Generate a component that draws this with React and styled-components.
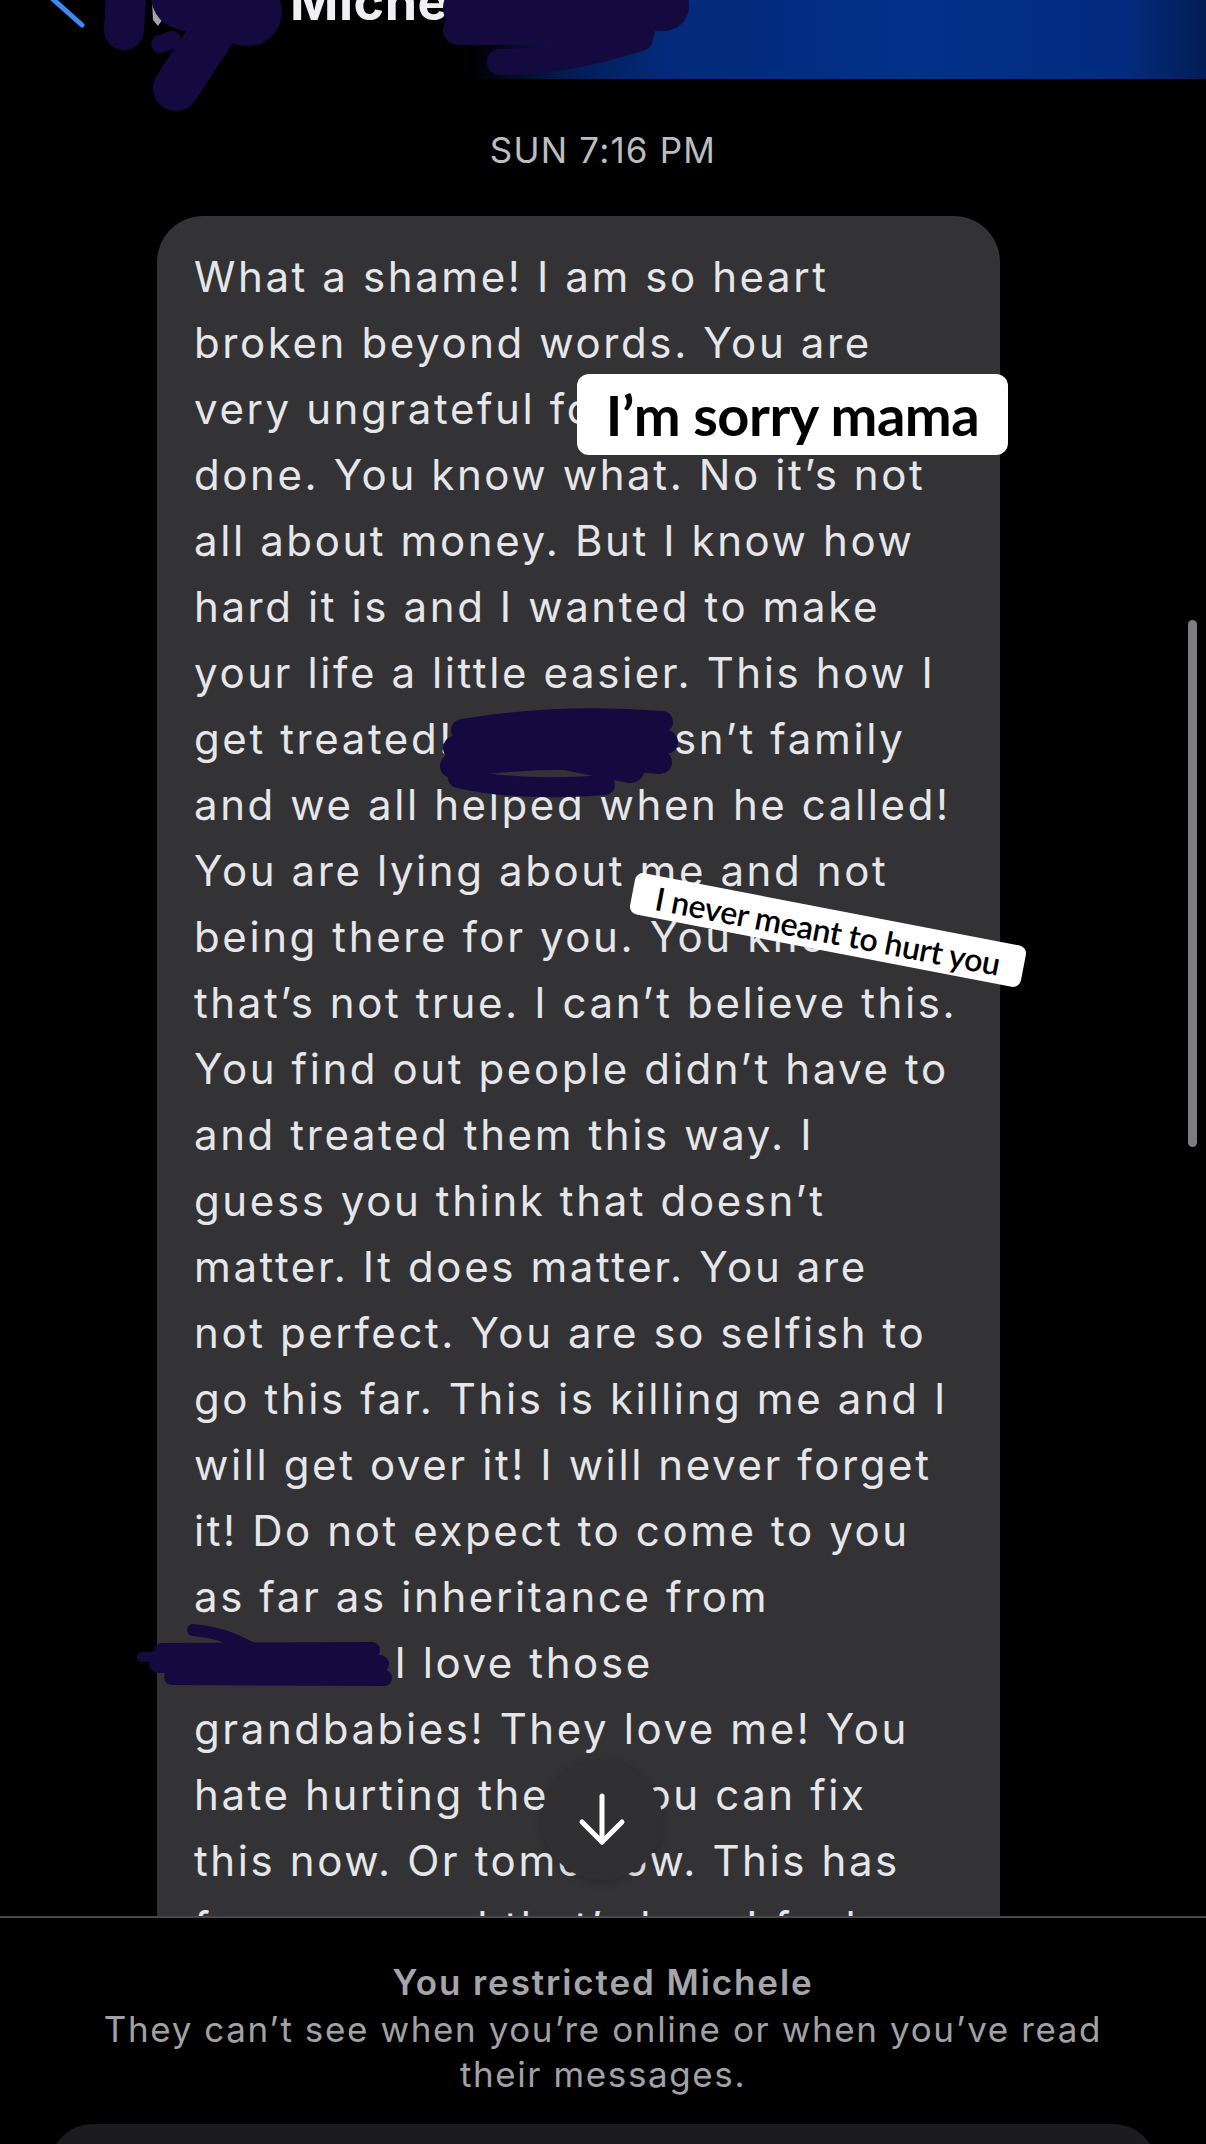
import React from 'react';
import styled, { createGlobalStyle } from 'styled-components';

const GlobalStyle = createGlobalStyle`
    html, body {
        margin: 0;
        padding: 0;
        background: #000;
    }
    * {
        box-sizing: border-box;
    }
`;

const StyledScreen = styled.div`
    position: relative;
    width: 1206px;
    height: 2144px;
    overflow: hidden;
    display: flex;
    flex-direction: column;
    background: #000;
    font-family: Inter, "Noto Sans", sans-serif;
`;

const StyledHeader = styled.header`
    flex: none;
    height: 79px;
    display: flex;
    align-items: flex-start;
    overflow: hidden;
    background: linear-gradient(90deg, #000 0%, #000 39%, #021c52 47%, #032a7a 55%, #033089 76%, #032c80 93%, #021d55 100%);
`;

const StyledBackIcon = styled.svg`
    flex: none;
    width: 50px;
    height: 30px;
    margin-left: 40px;
`;

const StyledName = styled.h1`
    margin: -24px 0 0 200px;
    font-size: 52px;
    line-height: 1;
    font-weight: 700;
    color: #f0f0f2;
    letter-spacing: 0.5px;
`;

const StyledThread = styled.main`
    flex: 1;
    min-height: 0;
    overflow: hidden;
    display: flex;
    flex-direction: column;
    align-items: flex-start;
`;

const StyledTimestamp = styled.div`
    align-self: stretch;
    margin-top: 50px;
    text-align: center;
    font-size: 35px;
    line-height: 42px;
    letter-spacing: 1.2px;
    color: #bdbdc1;
`;

const StyledBubble = styled.div`
    flex: none;
    width: 843px;
    margin: 45px 0 0 157px;
    padding: 28px 0 40px 37px;
    border-radius: 46px;
    background: #333335;
    color: #e6e6e8;
    font-size: 42px;
    line-height: 66px;
    letter-spacing: 2.6px;
`;

const StyledLine = styled.div`
    white-space: nowrap;
`;

const StyledHidden = styled.span`
    display: inline-block;
    width: ${({ $w }) => $w}px;
`;

const StyledFooter = styled.footer`
    flex: none;
    height: 228px;
    padding-top: 41px;
    border-top: 2px solid #48484a;
    display: flex;
    flex-direction: column;
    align-items: center;
    text-align: center;
`;

const StyledNoticeTitle = styled.div`
    font-size: 35px;
    line-height: 46px;
    font-weight: 600;
    letter-spacing: 1.9px;
    color: #a5a5aa;
`;

const StyledNoticeText = styled.div`
    max-width: 1020px;
    margin-top: 2px;
    font-size: 35px;
    line-height: 45px;
    letter-spacing: 1.6px;
    color: #a1a1a6;
`;

const StyledComposer = styled.div`
    flex: none;
    width: 1108px;
    height: 90px;
    margin-top: 27px;
    border-radius: 44px;
    background: #1c1c1e;
`;

const StyledScrollbar = styled.div`
    position: absolute;
    left: 1188px;
    top: 620px;
    width: 9px;
    height: 527px;
    border-radius: 5px;
    background: #7e7e80;
`;

const StyledScrollDown = styled.div`
    position: absolute;
    left: 542px;
    top: 1760px;
    width: 120px;
    height: 120px;
    border-radius: 50%;
    display: flex;
    align-items: center;
    justify-content: center;
    background: #303032;
    box-shadow: 0 2px 10px rgba(0, 0, 0, 0.2);
`;

const StyledSticker = styled.div`
    position: absolute;
    display: flex;
    align-items: center;
    justify-content: center;
    background: #fff;
    color: #000;
    white-space: nowrap;
    font-family: Lato, Inter, sans-serif;
`;

const StyledSorry = styled(StyledSticker)`
    left: 577px;
    top: 374px;
    width: 431px;
    height: 81px;
    border-radius: 12px;
    font-size: 56px;
    font-weight: 700;
    letter-spacing: -0.5px;
`;

const StyledNeverMeant = styled(StyledSticker)`
    left: 629px;
    top: 909px;
    width: 398px;
    height: 42px;
    border-radius: 8px;
    transform: rotate(10.9deg);
    font-size: 32px;
    font-weight: 600;
    letter-spacing: -0.3px;
`;

const StyledScribble = styled.svg`
    position: absolute;
    left: ${({ $x }) => $x}px;
    top: ${({ $y }) => $y}px;
    width: ${({ $w }) => $w}px;
    height: ${({ $h }) => $h}px;
    pointer-events: none;
    fill: none;
    stroke: #150a40;
    stroke-linecap: round;
    stroke-linejoin: round;
`;

const Scribble = ({ x, y, w, h, children }) => (
    <StyledScribble $x={x} $y={y} $w={w} $h={h} viewBox={`${x} ${y} ${w} ${h}`}>
        {children}
    </StyledScribble>
);

const lines = [
    'What a shame! I am so heart',
    'broken beyond words. You are',
    'very ungrateful for all I’ve',
    'done. You know what. No it’s not',
    'all about money. But I know how',
    'hard it is and I wanted to make',
    'your life a little easier. This how I',
    <>get treated! D<StyledHidden $w={160} />isn’t family</>,
    'and we all helped when he called!',
    'You are lying about me and not',
    'being there for you. You know',
    'that’s not true. I can’t believe this.',
    'You find out people didn’t have to',
    'and treated them this way. I',
    'guess you think that doesn’t',
    'matter. It does matter. You are',
    'not perfect. You are so selfish to',
    'go this far. This is killing me and I',
    'will get over it! I will never forget',
    'it! Do not expect to come to you',
    'as far as inheritance from',
    <><StyledHidden $w={186} /> I love those</>,
    'grandbabies! They love me! You',
    'hate hurting them. You can fix',
    'this now. Or tomorrow. This has',
    'for years and that’s how I feel',
    'about it.',
];

const App = () => {
    return (
        <>
            <GlobalStyle />
            <StyledScreen>
                <StyledHeader>
                    <StyledBackIcon viewBox="40 0 50 30">
                        <path d="M84 -40 L46 -7 L82 25" fill="none" stroke="#3d8af7" strokeWidth="5" strokeLinecap="round" strokeLinejoin="round" />
                    </StyledBackIcon>
                    <StyledName>Michele</StyledName>
                </StyledHeader>

                <StyledThread>
                    <StyledTimestamp>SUN 7:16 PM</StyledTimestamp>
                    <StyledBubble>
                        {lines.map((line, i) => (
                            <StyledLine key={i}>{line}</StyledLine>
                        ))}
                    </StyledBubble>
                </StyledThread>

                <StyledFooter>
                    <StyledNoticeTitle>You restricted Michele</StyledNoticeTitle>
                    <StyledNoticeText>They can’t see when you’re online or when you’ve read their messages.</StyledNoticeText>
                    <StyledComposer />
                </StyledFooter>

                {/* redaction marks drawn over the screenshot */}
                <Scribble x={95} y={0} w={210} h={125}>
                    <path d="M152 0 L171 0 L166 14 L158 26 L153 20 Z" fill="#a4a4a6" stroke="none" />
                    <path d="M127 -20 L124 30" strokeWidth="40" />
                    <path d="M185 -4 L248 12" strokeWidth="68" />
                    <path d="M214 30 L176 88" strokeWidth="46" />
                    <path d="M172 40 L160 44" strokeWidth="18" />
                </Scribble>
                <Scribble x={430} y={0} w={270} h={85}>
                    <path d="M468 8 L664 6" strokeWidth="50" />
                    <path d="M458 30 L640 30" strokeWidth="30" />
                    <path d="M500 62 Q 565 62 640 38" strokeWidth="26" />
                </Scribble>
                <Scribble x={430} y={700} w={260} h={100}>
                    <path d="M462 730 Q 560 714 662 722" strokeWidth="22" />
                    <path d="M455 748 Q 560 734 666 742" strokeWidth="24" />
                    <path d="M452 766 Q 550 752 660 762" strokeWidth="24" />
                    <path d="M458 778 Q 520 792 605 785" strokeWidth="20" />
                    <path d="M480 738 L 630 768" strokeWidth="30" />
                </Scribble>
                <Scribble x={125} y={1615} w={275} h={80}>
                    <path d="M193 1630 Q 222 1632 252 1648" strokeWidth="12" />
                    <path d="M142 1657 L 200 1655" strokeWidth="10" />
                    <path d="M162 1651 L 372 1650" strokeWidth="16" />
                    <path d="M158 1664 L 380 1664" strokeWidth="18" />
                    <path d="M172 1677 L 384 1678" strokeWidth="16" />
                </Scribble>

                <StyledSorry>I’m sorry mama</StyledSorry>
                <StyledNeverMeant>I never meant to hurt you</StyledNeverMeant>

                <StyledScrollDown>
                    <svg width="60" height="60" viewBox="0 0 60 60" fill="none" stroke="#fff" strokeWidth="5" strokeLinecap="round" strokeLinejoin="round">
                        <path d="M30 6 L30 52" />
                        <path d="M10 32 L30 52 L50 32" />
                    </svg>
                </StyledScrollDown>

                <StyledScrollbar />
            </StyledScreen>
        </>
    );
}

export default App
